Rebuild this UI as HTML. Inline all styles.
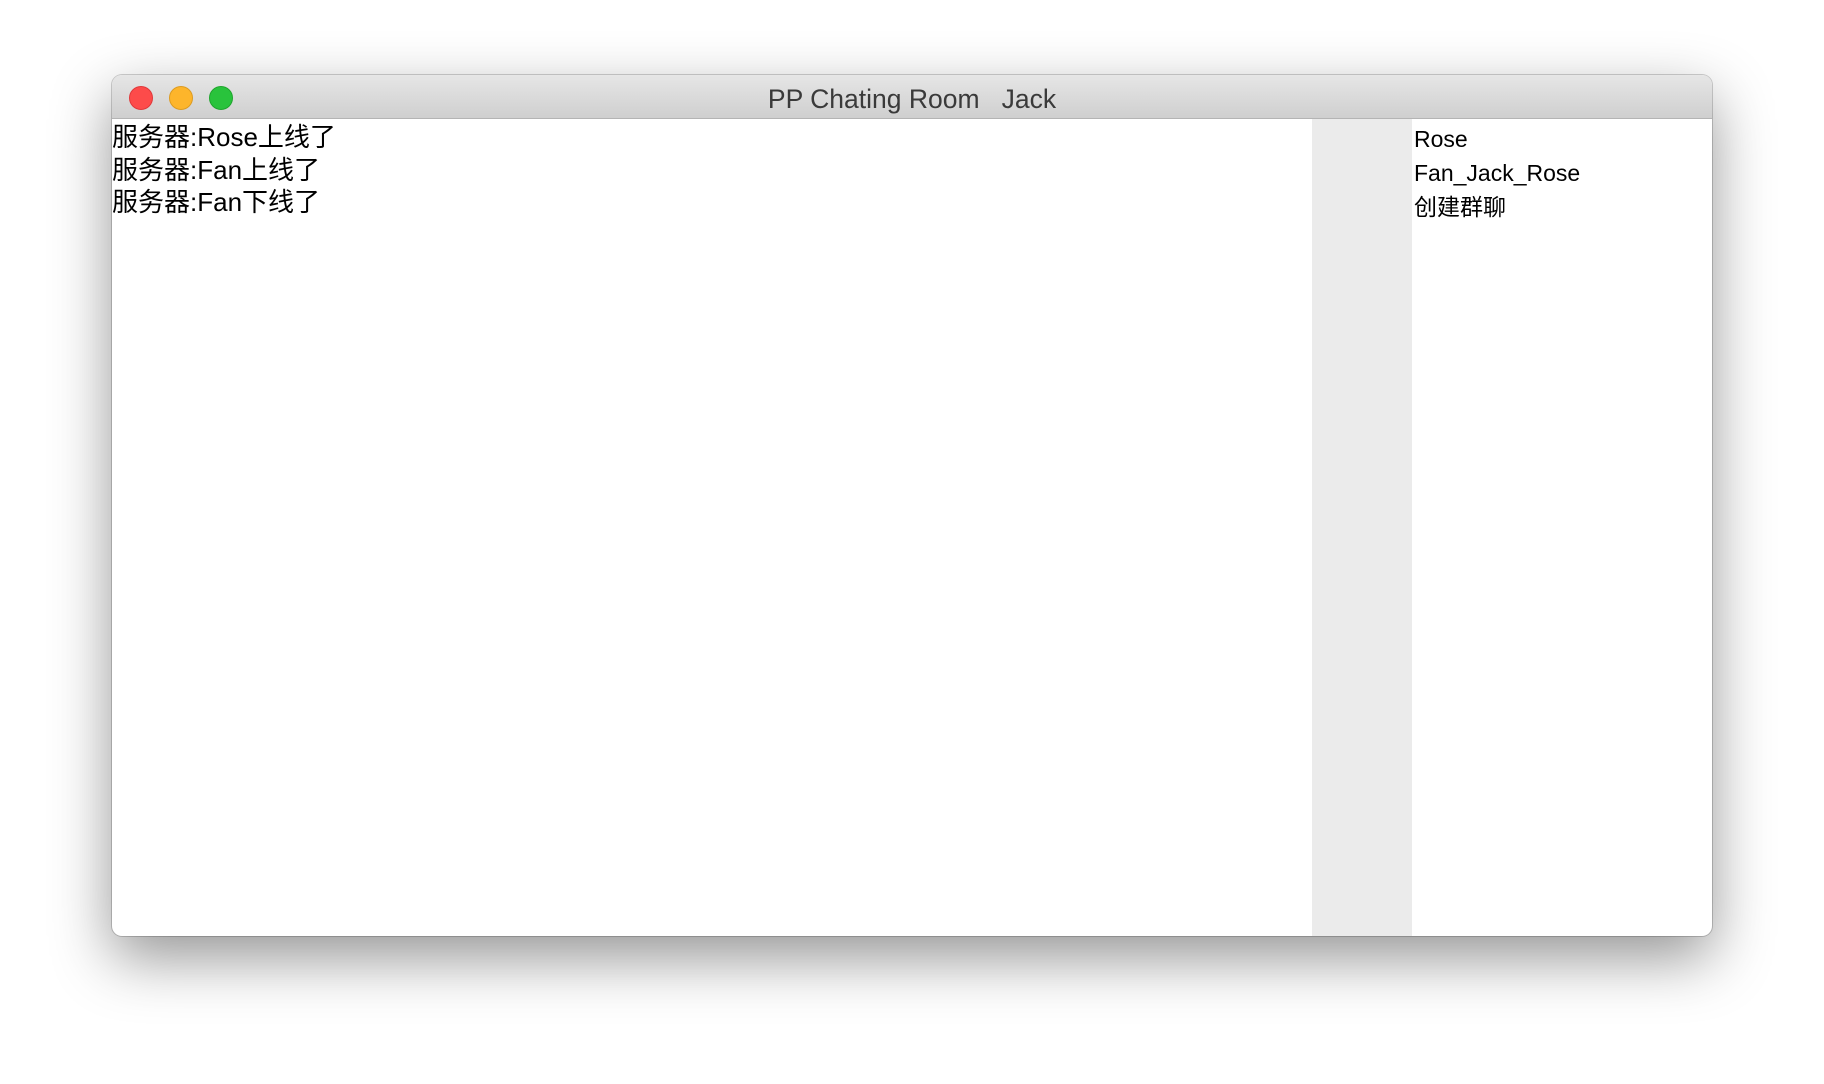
<!DOCTYPE html>
<html><head><meta charset="utf-8">
<style>
html,body{margin:0;padding:0;}
body{width:1824px;height:1084px;background:#fff;position:relative;overflow:hidden;font-family:"Liberation Sans","Noto Sans CJK SC",sans-serif;}
.win{position:absolute;left:112px;top:75px;width:1600px;height:861px;border-radius:10px;background:#fff;
box-shadow:0 22px 60px rgba(0,0,0,0.42),0 0 0 1px rgba(0,0,0,0.18);overflow:hidden;}
.tb{position:absolute;left:0;top:0;width:100%;height:43px;background:linear-gradient(#e6e6e6,#cfcfcf);border-bottom:1px solid #b4b4b4;}
.dot{position:absolute;top:11px;width:22px;height:22px;border-radius:50%;}
.title{position:absolute;left:0;right:0;top:1px;height:44px;line-height:46px;text-align:center;font-size:26.5px;color:#3a3a3a;white-space:pre;}
.msgs{position:absolute;left:0;top:46px;font-size:26px;line-height:32.5px;color:#000;}
.gray{position:absolute;left:1200px;top:44px;width:100px;bottom:0;background:#ebebeb;}
.list{position:absolute;left:1302px;top:47px;font-size:23px;line-height:34px;color:#000;}
</style></head><body>
<div class="win">
 <div class="tb">
  <div class="dot" style="left:17px;background:#fd4b4a;border:1px solid #e0383a;"></div>
  <div class="dot" style="left:57px;background:#fdb52b;border:1px solid #dd9b20;"></div>
  <div class="dot" style="left:97px;background:#29c33c;border:1px solid #1fa52d;"></div>
  <div class="title">PP Chating Room   Jack</div>
 </div>
 <div class="msgs">服务器:Rose上线了<br>服务器:Fan上线了<br>服务器:Fan下线了</div>
 <div class="gray"></div>
 <div class="list">Rose<br>Fan_Jack_Rose<br>创建群聊</div>
</div>
</body></html>
